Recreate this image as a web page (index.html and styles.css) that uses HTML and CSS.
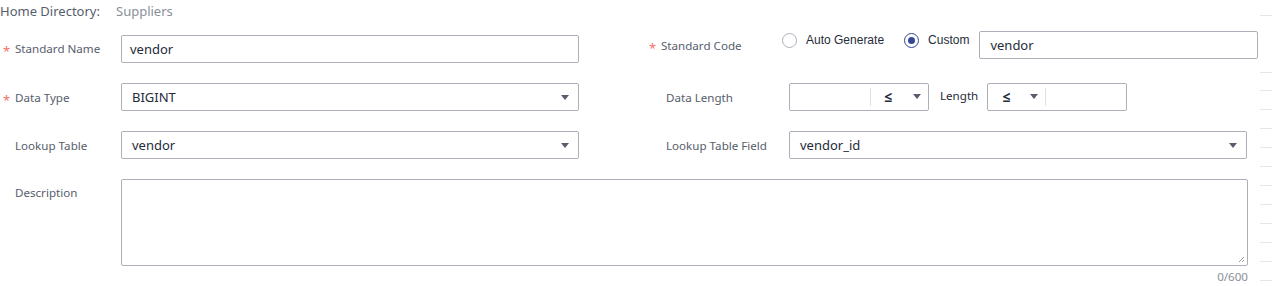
FILE: index.html
```html
<!DOCTYPE html>
<html>
  <head>
    <meta charset="UTF-8">
    <title>Standard</title>
    <link rel="stylesheet" href="styles.css">
  </head>
  <body>
    <!-- ENTETE -->
    <div class="head">
      <span class="head-label">Home Directory:</span>
      <span class="head-value">Suppliers</span>
    </div>

    <!-- LIGNE 1 -->
    <div class="row row-1">
      <div class="col-left">
        <label class="label"><span class="star">*</span>Standard Name</label>
        <div class="input">vendor</div>
      </div>
      <div class="col-right">
        <label class="label label-r label-code"><span class="star">*</span>Standard Code</label>
        <div class="radios">
          <span class="radio"></span><span class="radio-text">Auto Generate</span>
          <span class="radio checked"></span><span class="radio-text last">Custom</span>
        </div>
        <div class="input input-code">vendor</div>
      </div>
    </div>

    <!-- LIGNE 2 -->
    <div class="row row-2">
      <div class="col-left">
        <label class="label"><span class="star">*</span>Data Type</label>
        <div class="input select">BIGINT<span class="arrow"></span></div>
      </div>
      <div class="col-right">
        <label class="label label-r">Data Length</label>
        <div class="range">
          <span class="range-num"></span>
          <span class="range-op">≤<span class="arrow"></span></span>
        </div>
        <span class="length-text">Length</span>
        <div class="range">
          <span class="range-op first">≤<span class="arrow"></span></span>
          <span class="range-num"></span>
        </div>
      </div>
    </div>

    <!-- LIGNE 3 -->
    <div class="row row-3">
      <div class="col-left">
        <label class="label">Lookup Table</label>
        <div class="input select">vendor<span class="arrow"></span></div>
      </div>
      <div class="col-right">
        <label class="label label-r">Lookup Table Field</label>
        <div class="input select wide">vendor_id<span class="arrow"></span></div>
      </div>
    </div>

    <!-- DESCRIPTION -->
    <div class="row row-4">
      <label class="label label-top">Description</label>
      <div class="area">
        <svg class="grip" width="7" height="7" viewBox="0 0 7 7">
          <path d="M6 1 L1 6 M6 4 L4 6" stroke="#9a9a9a" stroke-width="1"/>
        </svg>
      </div>
    </div>
    <div class="counter">0/600</div>

    <!-- TRAITS A DROITE -->
    <div class="edge">
      <i style="top:15px"></i><i style="top:72px"></i><i style="top:90px"></i>
      <i style="top:109px"></i><i style="top:128px"></i><i style="top:147px"></i>
      <i style="top:166px"></i><i style="top:185px"></i><i style="top:204px"></i>
      <i style="top:223px"></i><i style="top:242px"></i><i style="top:261px"></i>
      <i style="top:280px"></i>
    </div>
  </body>
</html>
```

FILE: styles.css
```css
/* CSS styles */
body {
  margin: 0;
  font-family: "Noto Sans", "Open Sans", sans-serif;
  font-size: 11.6px;
  color: #575d6c;
  background: white;
  width: 1272px;
  height: 286px;
  overflow: hidden;
  position: relative;
}

.head {
  height: 21px;
  display: flex;
  align-items: center;
}

.head-label {
  font-size: 13px;
  color: #575d6c;
  width: 116px;
}

.head-value {
  font-size: 13px;
  color: #8a8e99;
}

.row {
  display: flex;
}

.row-1 {
  margin-top: 10px;
  height: 31px;
}

.row-2 {
  margin-top: 21px;
}

.row-3 {
  margin-top: 20px;
}

.row-4 {
  margin-top: 20px;
}

.col-left {
  width: 649px;
  display: flex;
  align-items: center;
}

.col-right {
  display: flex;
  align-items: center;
}

.row-1 .col-left {
  padding-top: 4px;
}

.row-1 .col-right {
  align-self: flex-start;
  height: 28px;
}

.label {
  width: 121px;
  box-sizing: border-box;
  padding-left: 15px;
  position: relative;
  color: #575d6c;
  white-space: nowrap;
}

.label-r {
  width: 140px;
  padding-left: 17px;
}

.label-code {
  width: 133px;
  padding-left: 12px;
}

.label-top {
  align-self: flex-start;
  padding-top: 6px;
}

.star {
  position: absolute;
  left: 3px;
  top: 1px;
  color: #f66f6a;
  font-size: 13px;
}

.label-r .star {
  left: 0;
}

.input {
  width: 458px;
  height: 28px;
  box-sizing: border-box;
  border: 1px solid #adb0b8;
  border-radius: 2px;
  padding: 0 8px;
  line-height: 26px;
  font-size: 13px;
  color: #252b3a;
  position: relative;
}

.select {
  padding-left: 10px;
}

.input-code {
  width: 279px;
  padding-left: 10px;
}

.arrow {
  position: absolute;
  right: 9px;
  top: 11px;
  width: 0;
  height: 0;
  border-left: 4px solid transparent;
  border-right: 4px solid transparent;
  border-top: 5px solid #575d6c;
}

.radios {
  display: flex;
  align-items: center;
  align-self: flex-start;
  height: 18px;
  font-family: "Liberation Sans", Arial, sans-serif;
  font-size: 12px;
  color: #252b3a;
  white-space: nowrap;
}

.radio {
  width: 15px;
  height: 15px;
  box-sizing: border-box;
  border: 1px solid #adb0b8;
  border-radius: 50%;
  margin-right: 9px;
  position: relative;
  flex: none;
}

.radio.checked {
  border-color: #344899;
}

.radio.checked::after {
  content: "";
  position: absolute;
  left: 3px;
  top: 3px;
  width: 7px;
  height: 7px;
  border-radius: 50%;
  background: #344899;
}

.radio-text {
  margin-right: 20px;
}

.radio-text.last {
  margin-right: 10px;
}

.range {
  width: 140px;
  height: 28px;
  box-sizing: border-box;
  border: 1px solid #adb0b8;
  border-radius: 2px;
  display: flex;
  align-items: center;
}

.range-num {
  flex: 1;
  height: 26px;
}

.range-op {
  width: 58px;
  height: 18px;
  border-left: 1px solid #dfe1e6;
  position: relative;
  padding-left: 13px;
  box-sizing: border-box;
  font-size: 14px;
  font-weight: bold;
  line-height: 18px;
  color: #252b3a;
}

.range-op.first {
  border-left: none;
  border-right: 1px solid #dfe1e6;
  padding-left: 14px;
}

.range-op .arrow {
  top: 6px;
  right: 7px;
}

.length-text {
  margin: -3px 9px 0 11px;
  color: #252b3a;
}

.area {
  width: 1127px;
  height: 87px;
  box-sizing: border-box;
  border: 1px solid #adb0b8;
  border-radius: 2px;
  position: relative;
}

.grip {
  position: absolute;
  right: 2px;
  bottom: 2px;
}

.counter {
  width: 1248px;
  text-align: right;
  margin-top: 4px;
  line-height: 14px;
  color: #8a8e99;
}

.edge i {
  position: absolute;
  left: 1260px;
  width: 12px;
  height: 1px;
  background: #e6e6e6;
}
```
